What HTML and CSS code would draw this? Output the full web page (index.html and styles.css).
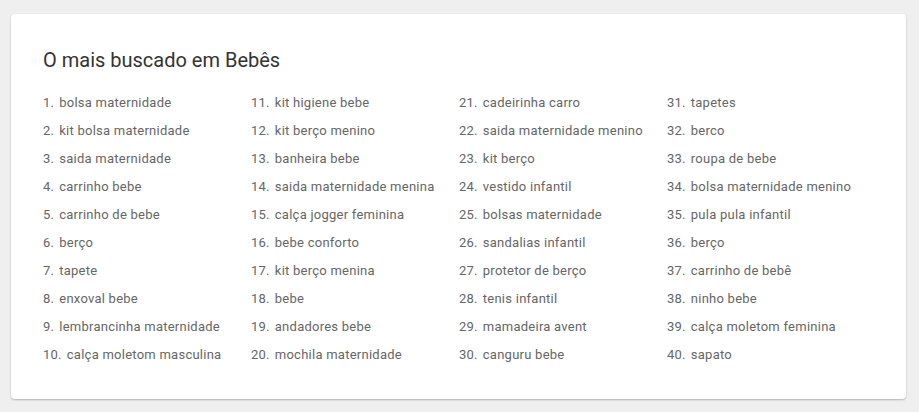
FILE: index.html
```html
<!DOCTYPE html>
<html lang="pt-BR">
<head>
  <meta charset="utf-8">
  <title>O mais buscado em Bebês</title>
  <link rel="stylesheet" href="styles.css">
</head>
<body>

  <div class="card">
    <h2 class="card-title">O mais buscado em Bebês</h2>
    <ol class="top-searches">
      <li><span class="num">1.</span>bolsa maternidade</li>
      <li><span class="num">2.</span>kit bolsa maternidade</li>
      <li><span class="num">3.</span>saida maternidade</li>
      <li><span class="num">4.</span>carrinho bebe</li>
      <li><span class="num">5.</span>carrinho de bebe</li>
      <li><span class="num">6.</span>berço</li>
      <li><span class="num">7.</span>tapete</li>
      <li><span class="num">8.</span>enxoval bebe</li>
      <li><span class="num">9.</span>lembrancinha maternidade</li>
      <li><span class="num">10.</span>calça moletom masculina</li>
      <li><span class="num">11.</span>kit higiene bebe</li>
      <li><span class="num">12.</span>kit berço menino</li>
      <li><span class="num">13.</span>banheira bebe</li>
      <li><span class="num">14.</span>saida maternidade menina</li>
      <li><span class="num">15.</span>calça jogger feminina</li>
      <li><span class="num">16.</span>bebe conforto</li>
      <li><span class="num">17.</span>kit berço menina</li>
      <li><span class="num">18.</span>bebe</li>
      <li><span class="num">19.</span>andadores bebe</li>
      <li><span class="num">20.</span>mochila maternidade</li>
      <li><span class="num">21.</span>cadeirinha carro</li>
      <li><span class="num">22.</span>saida maternidade menino</li>
      <li><span class="num">23.</span>kit berço</li>
      <li><span class="num">24.</span>vestido infantil</li>
      <li><span class="num">25.</span>bolsas maternidade</li>
      <li><span class="num">26.</span>sandalias infantil</li>
      <li><span class="num">27.</span>protetor de berço</li>
      <li><span class="num">28.</span>tenis infantil</li>
      <li><span class="num">29.</span>mamadeira avent</li>
      <li><span class="num">30.</span>canguru bebe</li>
      <li><span class="num">31.</span>tapetes</li>
      <li><span class="num">32.</span>berco</li>
      <li><span class="num">33.</span>roupa de bebe</li>
      <li><span class="num">34.</span>bolsa maternidade menino</li>
      <li><span class="num">35.</span>pula pula infantil</li>
      <li><span class="num">36.</span>berço</li>
      <li><span class="num">37.</span>carrinho de bebê</li>
      <li><span class="num">38.</span>ninho bebe</li>
      <li><span class="num">39.</span>calça moletom feminina</li>
      <li><span class="num">40.</span>sapato</li>
    </ol>
  </div>

</body>
</html>
```

FILE: styles.css
```css
body {
  margin: 0;
  background-color: #efefef;
  font-family: 'Roboto', 'Liberation Sans', sans-serif;
}
.card {
  margin: 14px 13px 14px 11px;
  padding: 34px 32px 30px 32px;
  background-color: #fff;
  border-radius: 4px;
  box-shadow: 0 1px 2px rgba(0, 0, 0, 0.25);
}
.card-title {
  margin: 0 0 17px 0;
  font-size: 20px;
  line-height: 24px;
  font-weight: normal;
  color: #333;
}
.top-searches {
  list-style: none;
  margin: 0;
  padding: 0;
  display: grid;
  grid-template-columns: repeat(4, 208px);
  grid-template-rows: repeat(10, 28px);
  grid-auto-flow: column;
}
.top-searches li {
  font-size: 13px;
  line-height: 28px;
  letter-spacing: 0.25px;
  color: #666;
  white-space: nowrap;
}
.num {
  margin-right: 5px;
}
```
